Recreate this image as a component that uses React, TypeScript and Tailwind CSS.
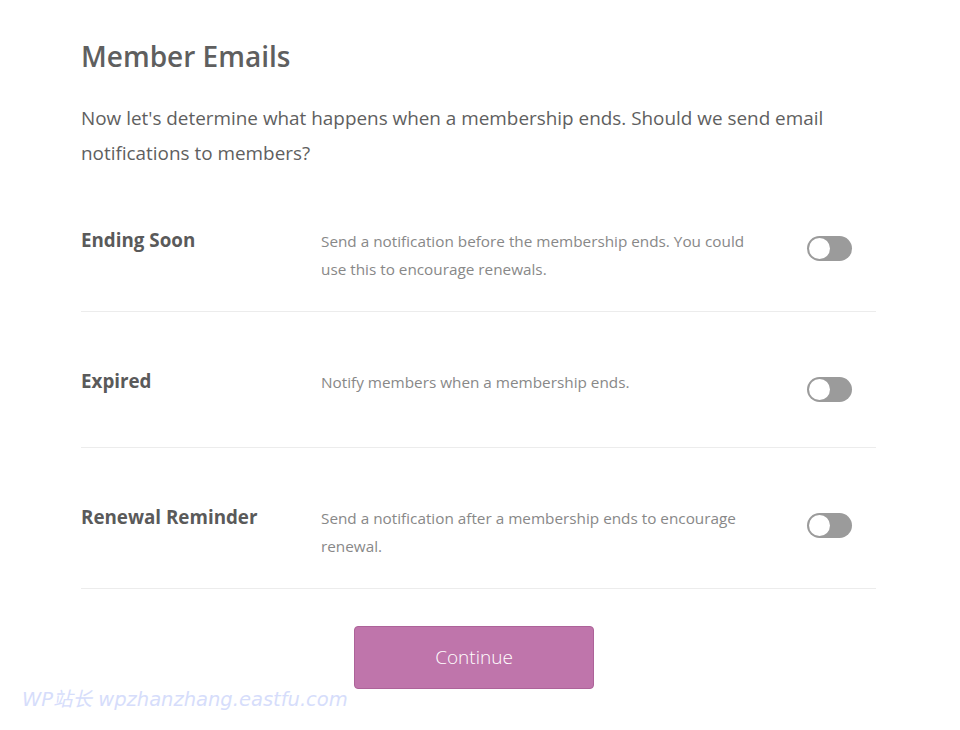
import React from "react";

function Toggle() {
  return (
    <div className="w-[45px] h-[25px] rounded-full bg-[#9b9b9b] relative shrink-0">
      <div className="absolute left-[2px] top-[2px] w-[21px] h-[21px] rounded-full bg-white" />
    </div>
  );
}

const rows = [
  {
    label: "Ending Soon",
    desc: "Send a notification before the membership ends. You could use this to encourage renewals.",
    h: "h-[141px]",
  },
  { label: "Expired", desc: "Notify members when a membership ends.", h: "h-[136px]" },
  {
    label: "Renewal Reminder",
    desc: "Send a notification after a membership ends to encourage renewal.",
    h: "h-[141px]",
  },
];

export default function App() {
  return (
    <div
      className="w-[960px] h-[730px] bg-white relative overflow-hidden"
      style={{ fontFamily: '"Open Sans", "Noto Sans", sans-serif' }}
    >
      <div className="ml-[81px] w-[795px] pt-[36px]">
        <h1 className="text-[28px] leading-[40px] font-semibold text-[#5f5f5f]">Member Emails</h1>
        <p className="mt-[25px] text-[18.9px] leading-[35px] text-[#5f5f5f] w-[760px]">
          Now let's determine what happens when a membership ends. Should we send email notifications to members?
        </p>
        <div>
          {rows.map((r) => (
            <div key={r.label} className={`flex border-b border-[#ececec] pt-[55px] ${r.h}`}>
              <div className="w-[240px] shrink-0 text-[18.8px] leading-[28px] font-bold text-[#5a5a5a]">
                {r.label}
              </div>
              <div className="w-[445px] shrink-0 text-[15.3px] leading-[28px] text-[#888888] pt-[1px]">
                {r.desc}
              </div>
              <div className="flex-1 flex justify-end pr-[24px] pt-[10px]">
                <Toggle />
              </div>
            </div>
          ))}
        </div>
        <div className="flex justify-center pr-[9px] mt-[37px]">
          <button className="w-[240px] h-[63px] rounded-[4px] bg-[#bf75ab] border border-[#ad6399] text-white text-[19px] font-light">
            Continue
          </button>
        </div>
      </div>
      <div
        className="absolute left-[22px] top-[685px] text-[19.5px] italic text-[#d6ddfb]"
        style={{ fontFamily: '"DejaVu Sans", "Noto Sans CJK SC", sans-serif' }}
      >
        WP站长 wpzhanzhang.eastfu.com
      </div>
    </div>
  );
}
